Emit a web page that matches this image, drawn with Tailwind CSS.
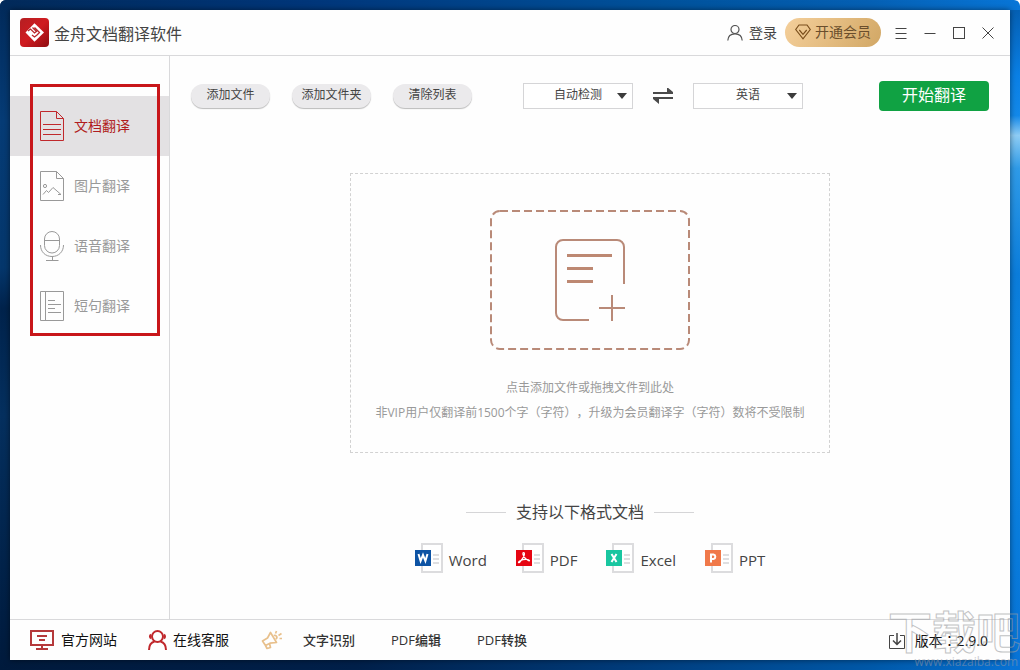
<!DOCTYPE html>
<html lang="zh-CN">
<head>
<meta charset="utf-8">
<meta name="viewport" content="width=device-width, initial-scale=1">
<title>金舟文档翻译软件</title>
<script src="https://cdn.jsdelivr.net/npm/@tailwindcss/browser@4"></script>
</head>
<body class="bg-white font-['Open_Sans','Noto_Sans_CJK_SC',sans-serif] text-[#444]">
<div class="relative flex min-h-screen flex-col overflow-hidden rounded-t-md bg-[linear-gradient(to_right,#022a5a,#00367a_30%,#00529c_65%,#0560b4_85%,#0876d8)] p-2.5">
  <div class="absolute inset-x-0 bottom-0 h-2.5 bg-[linear-gradient(to_right,#001a3c,#00204a_35%,#003a78_60%,#0058a8_85%,#0873d6)]"></div>
  <div class="absolute bottom-0 left-0 top-0 w-2.5 bg-[linear-gradient(to_bottom,#022a5a,#063c76_18%,#05376c_40%,#01234c_46%,#05305f_62%,#001a3c)]"></div>
  <div class="absolute bottom-0 right-0 top-2.5 w-2.5 bg-[linear-gradient(to_bottom,#0560b4,#0a80e6_10%,#1389ea_16%,#8fcdf5_19%,#2f9be8_24%,#0b7ddb_40%,#0a86e4_60%,#0873d6)]"></div>

  <div class="relative flex flex-1 flex-col bg-[#fefefe] shadow-[0_0_6px_rgba(0,0,0,0.5)]">
    <header class="flex h-[46px] items-center border-b border-[#d9d9db] pl-2.5 pr-3.5">
      <svg class="size-[29px]" viewBox="0 0 29 29" aria-hidden="true">
        <defs><linearGradient id="lg" x1="0" y1="0" x2="1" y2="1"><stop offset="0" stop-color="#b41f22"/><stop offset=".5" stop-color="#d01b20"/><stop offset="1" stop-color="#8e0c10"/></linearGradient></defs>
        <rect width="29" height="29" rx="4" fill="url(#lg)"/>
        <path d="M14.500 5.300 24 14.500 14.500 23.700 5.500 14.500Z" fill="#fff"/>
        <path d="M8 13 10.500 11 14.500 15 16.500 13.500 12.500 9.500M12 17 14.500 19 17 17M14.500 9.500 19.500 14.500 17 17" fill="none" stroke="#b8282c" stroke-width="1.300"/>
      </svg>
      <h1 class="ml-[5px] pt-0.5 text-base leading-6">金舟文档翻译软件</h1>
      <div class="ml-auto flex items-center">
        <button class="flex items-center gap-1.5 text-sm leading-5">
          <svg class="size-4" viewBox="0 0 16 16" fill="none" stroke="#555" stroke-width="1.200" aria-hidden="true"><circle cx="8" cy="4.500" r="4"/><path d="M.8 15.500C1 11.500 3.500 8.800 8 8.800S15 11.500 15.200 15.500"/></svg>
          登录
        </button>
        <button class="ml-2 flex h-[29px] w-24 items-center justify-center gap-1 rounded-full bg-[linear-gradient(120deg,#f4cf9b,#e4bc80_50%,#d1a765)] pb-0.5 text-sm leading-5 text-[#6a4e2c]">
          <svg class="h-4 w-4" viewBox="0 0 16 16" fill="none" stroke="#7a4e1c" stroke-width="1.200" aria-hidden="true"><path d="M4 1H12L15.300 5.500 8 14.800.7 5.500Z"/><path d="M4.300 6 8 10.300 11.700 6"/></svg>
          开通会员
        </button>
        <button class="ml-3 flex w-4 justify-center" aria-label="菜单"><svg class="size-3" viewBox="0 0 12 12" stroke="#444" aria-hidden="true"><path d="M.5 1.500H11.500M.5 6.500H11.500M.5 11.500H11.500"/></svg></button>
        <button class="ml-[13px] flex w-4 justify-center" aria-label="最小化"><svg class="size-3" viewBox="0 0 12 12" stroke="#444" aria-hidden="true"><path d="M.5 6.500H11.500"/></svg></button>
        <button class="ml-[13px] flex w-4 justify-center" aria-label="最大化"><svg class="size-3" viewBox="0 0 12 12" fill="none" stroke="#444" aria-hidden="true"><rect x=".5" y=".5" width="11" height="11"/></svg></button>
        <button class="ml-[13px] flex w-4 justify-center" aria-label="关闭"><svg class="size-3" viewBox="0 0 12 12" stroke="#444" aria-hidden="true"><path d="M.5.5 11.500 11.500M11.500.5.5 11.500"/></svg></button>
      </div>
    </header>

    <div class="flex flex-1">
      <nav class="relative w-40 shrink-0 border-r border-[#d9d9db] pt-10 text-sm leading-5 text-[#999]">
        <a href="#doc" class="flex h-[60px] items-center gap-2.5 bg-[#e3e1e3] pl-[30px] text-[#b01c20]">
          <svg class="h-[30px] w-6" viewBox="0 0 24 30" fill="none" stroke="#c0282c" aria-hidden="true"><path d="M.5.5H16.500L23.500 7.500V29.500H.5ZM16.500.5V7.500H23.500M3 13.500H21M3 18.500H21M3 23.500H21"/></svg>
          文档翻译
        </a>
        <a href="#image" class="flex h-[60px] items-center gap-2.5 pl-[30px]">
          <svg class="h-[30px] w-6" viewBox="0 0 24 30" fill="none" stroke="#999" aria-hidden="true"><path d="M.5.5H16.500L23.500 7.500V29.500H.5ZM16.500.5V7.500H23.500M3 23.500 6.500 19.500 8.500 21.500 13 16.500 21 23.500H18"/><circle cx="5" cy="15" r="1.600"/></svg>
          图片翻译
        </a>
        <a href="#voice" class="flex h-[60px] items-center gap-2.5 pl-[30px]">
          <svg class="h-[30px] w-6" viewBox="0 0 24 30" fill="none" stroke="#999" aria-hidden="true"><rect x="4.500" y=".5" width="15" height="21.500" rx="7.500"/><path d="M4.500 9.500H19.500M.5 14C.5 21 5.500 25.500 12 25.500S23.500 21 23.500 14M12.500 25.500V29.500M6 29.500H18.500"/></svg>
          语音翻译
        </a>
        <a href="#phrase" class="flex h-[60px] items-center gap-2.5 pl-[30px]">
          <svg class="h-[30px] w-6" viewBox="0 0 24 30" fill="none" stroke="#999" aria-hidden="true"><path d="M.5.5H23.500V29.500H.5ZM5.500.5V29.500M8 9.500H15M8 13.500H21M8 17.500H15M8 21.500H21"/></svg>
          短句翻译
        </a>
        <div class="pointer-events-none absolute left-5 top-7 h-[252px] w-[130px] border-3 border-[#c8161a]"></div>
      </nav>

      <main class="flex flex-1 flex-col items-center pb-[46px] pt-[25px]">
        <div class="flex h-[30px] w-full items-center px-[21px] text-xs leading-4">
          <div class="flex gap-[22px]">
            <button class="h-6 w-[79px] rounded-full bg-[#ebeaec] pb-0.5 shadow-[0_1px_1px_#bbb]">添加文件</button>
            <button class="h-6 w-[79px] rounded-full bg-[#ebeaec] pb-0.5 shadow-[0_1px_1px_#bbb]">添加文件夹</button>
            <button class="h-6 w-[79px] rounded-full bg-[#ebeaec] pb-0.5 shadow-[0_1px_1px_#bbb]">清除列表</button>
          </div>
          <div class="ml-[51px] flex items-center gap-5">
            <div class="relative">
              <select aria-label="源语言" class="block h-[26px] w-[110px] appearance-none border border-[#d5d5d7] bg-white pb-0.5 text-xs [text-align-last:center]"><option>自动检测</option></select>
              <svg class="pointer-events-none absolute right-1.5 top-2.5 h-1.5 w-2.5" viewBox="0 0 10 6" fill="#3c3c3c" aria-hidden="true"><path d="M0 0H10L5 6Z"/></svg>
            </div>
            <button aria-label="交换语言"><svg class="h-4 w-5" viewBox="0 0 20 16" fill="#4a4a4a" aria-hidden="true"><path d="M0 4H14V-1L20 4V6H0ZM0 9H20V11H6V16L0 11Z"/></svg></button>
            <div class="relative">
              <select aria-label="目标语言" class="block h-[26px] w-[110px] appearance-none border border-[#d5d5d7] bg-white pb-0.5 text-xs [text-align-last:center]"><option>英语</option></select>
              <svg class="pointer-events-none absolute right-1.5 top-2.5 h-1.5 w-2.5" viewBox="0 0 10 6" fill="#3c3c3c" aria-hidden="true"><path d="M0 0H10L5 6Z"/></svg>
            </div>
          </div>
          <button class="ml-auto h-[30px] w-[110px] rounded bg-[#10a243] pb-0.5 text-base leading-6 text-white">开始翻译</button>
        </div>

        <section class="mt-[62px] flex h-[280px] w-[480px] flex-col items-center border border-dashed border-[#d2d2d2] pt-9 text-xs leading-[25px] text-[#999]">
          <button aria-label="添加文件">
            <svg class="block h-[140px] w-[200px]" viewBox="0 0 200 140" fill="none" stroke="#b98a78" stroke-width="2" aria-hidden="true">
              <rect x="1" y="1" width="198" height="138" rx="9" stroke-dasharray="8 4"/>
              <path d="M134 74V37a7 7 0 0 0-7-7H73a7 7 0 0 0-7 7V103a7 7 0 0 0 7 7H99M109 98H135M122 85V111"/>
              <path d="M77 45.500H122M77 58.500H103M77 71.500H103" stroke-width="3" stroke="#bd8872"/>
            </svg>
          </button>
          <p class="mt-[25px]">点击添加文件或拖拽文件到此处</p>
          <p class="whitespace-nowrap [text-spacing-trim:space-all]">非VIP用户仅翻译前1500个字（字符），升级为会员翻译字（字符）数将不受限制</p>
        </section>

        <div class="mr-5 mt-[47px] flex items-center gap-2.5">
          <span class="h-px w-10 bg-[#d5d5d7]"></span>
          <h2 class="text-base leading-6">支持以下格式文档</h2>
          <span class="h-px w-10 bg-[#d5d5d7]"></span>
        </div>

        <ul class="mt-[19px] flex gap-[29px] text-[15px] leading-6">
          <li class="flex items-center gap-1.5">
            <svg class="h-[30px] w-7" viewBox="0 0 28 30" aria-hidden="true"><path d="M7 1H27V29H7Z" fill="#fff" stroke="#dcdcde" stroke-width="2"/><path d="M18 12H24M18 16H24M18 20H24" stroke="#d5d5d8" stroke-width="1.500"/><path d="M0 7H16V23H0Z" fill="#0d53a4"/><path d="M3.500 11 5.600 18 8 12 10.400 18 12.500 11" fill="none" stroke="#fff" stroke-width="2"/></svg>
            <span class="mt-1">Word</span>
          </li>
          <li class="flex items-center gap-1.5">
            <svg class="h-[30px] w-7" viewBox="0 0 28 30" aria-hidden="true"><path d="M7 1H27V29H7Z" fill="#fff" stroke="#dcdcde" stroke-width="2"/><path d="M18 12H24M18 16H24M18 20H24" stroke="#d5d5d8" stroke-width="1.500"/><path d="M0 7H16V23H0Z" fill="#e60512"/><path d="M7.500 9.500C9.500 9.500 8.500 14 3.500 19.500 2 20.500 2 18.500 4.500 17.500 8 16 13 16.200 13.500 17.500 13.500 19 8 15.500 7 11.500 6.800 10 7 9.500 7.500 9.500" fill="none" stroke="#fff" stroke-width="1.200"/></svg>
            <span class="mt-1">PDF</span>
          </li>
          <li class="flex items-center gap-1.5">
            <svg class="h-[30px] w-7" viewBox="0 0 28 30" aria-hidden="true"><path d="M7 1H27V29H7Z" fill="#fff" stroke="#dcdcde" stroke-width="2"/><path d="M18 12H24M18 16H24M18 20H24" stroke="#d5d5d8" stroke-width="1.500"/><path d="M0 7H16V23H0Z" fill="#19c6a0"/><path d="M5.500 11 10.500 19M10.500 11 5.500 19" stroke="#fff" stroke-width="2"/></svg>
            <span class="mt-1">Excel</span>
          </li>
          <li class="flex items-center gap-1.5">
            <svg class="h-[30px] w-7" viewBox="0 0 28 30" aria-hidden="true"><path d="M7 1H27V29H7Z" fill="#fff" stroke="#dcdcde" stroke-width="2"/><path d="M18 12H24M18 16H24M18 20H24" stroke="#d5d5d8" stroke-width="1.500"/><path d="M0 7H16V23H0Z" fill="#f0794a"/><path d="M6 19.500V11.500H8.500A2.300 2.300 0 0 1 8.500 16H6" fill="none" stroke="#fff" stroke-width="2"/></svg>
            <span class="mt-1">PPT</span>
          </li>
        </ul>
      </main>
    </div>

    <footer class="flex h-[41px] items-center border-t border-[#d9d9db] pl-5 pr-[22px] text-sm leading-5 text-[#111]">
      <a href="#site" class="flex items-center gap-[7px]">
        <svg class="h-5 w-6" viewBox="0 0 24 20" fill="none" stroke="#b5383a" stroke-width="2" aria-hidden="true"><path d="M1 1H23V15H1ZM7 6H17M9 10H15M12 15V19M6 19H18"/></svg>
        官方网站
      </a>
      <a href="#support" class="ml-[31px] flex items-center gap-1.5">
        <svg class="h-5 w-[19px]" viewBox="0 0 19 20" fill="none" stroke="#c0282c" stroke-width="2" aria-hidden="true"><circle cx="9.500" cy="6.500" r="5.500"/><path d="M3 4.500Q1 6.500 3 8.500M16 4.500Q18 6.500 16 8.500M1 20C1 16 3 12.500 6.500 11.500M18 20C18 16 16 12.500 12.500 11.500"/></svg>
        在线客服
      </a>
      <svg class="ml-8 h-5 w-[22px]" viewBox="0 0 22 20" fill="none" stroke="#e8c08c" stroke-width="1.700" stroke-linejoin="round" aria-hidden="true"><path d="M9.500 2.500 15.500 12.500 9 13.200 4.500 15.500 1.500 11 6.500 8ZM4.500 15.500 6 18.500 9.500 17.500 8.500 13.500M12.800 5.500C15.500 4.500 17 7.500 14.800 9M14.500 3.500 15.500 1M17.500 5.500 20.500 3.500M18.500 8.500H21"/></svg>
      <div class="ml-5 flex gap-9 text-[13px] font-medium text-[#333]">
        <a href="#ocr">文字识别</a>
        <a href="#edit">PDF编辑</a>
        <a href="#convert">PDF转换</a>
      </div>
      <div class="ml-auto flex items-center gap-2.5 pt-0.5">
        <svg class="size-4" viewBox="0 0 16 16" fill="none" stroke="#444" aria-hidden="true"><path d="M5 2.500H.5V15.500H15.500V2.500H11"/><path d="M8 0V11.500M4 7.500 8 11.500 12 7.500" stroke-width="1.500"/></svg>
        <span lang="zh-TW" class="font-['Open_Sans','Noto_Sans_CJK_TC',sans-serif]">版本：2.9.0</span>
      </div>
    </footer>
  </div>

  <div class="pointer-events-none absolute bottom-0 right-0 flex flex-col items-end" aria-hidden="true">
    <span class="text-[44px] font-bold leading-[44px] text-transparent opacity-60 [-webkit-text-stroke:1px_#9a9ca0]">下载吧</span>
    <span class="mr-0.5 text-xs leading-4 text-[#9a9ca8] opacity-50">www.xiazaiba.com</span>
  </div>
</div>
</body>
</html>
